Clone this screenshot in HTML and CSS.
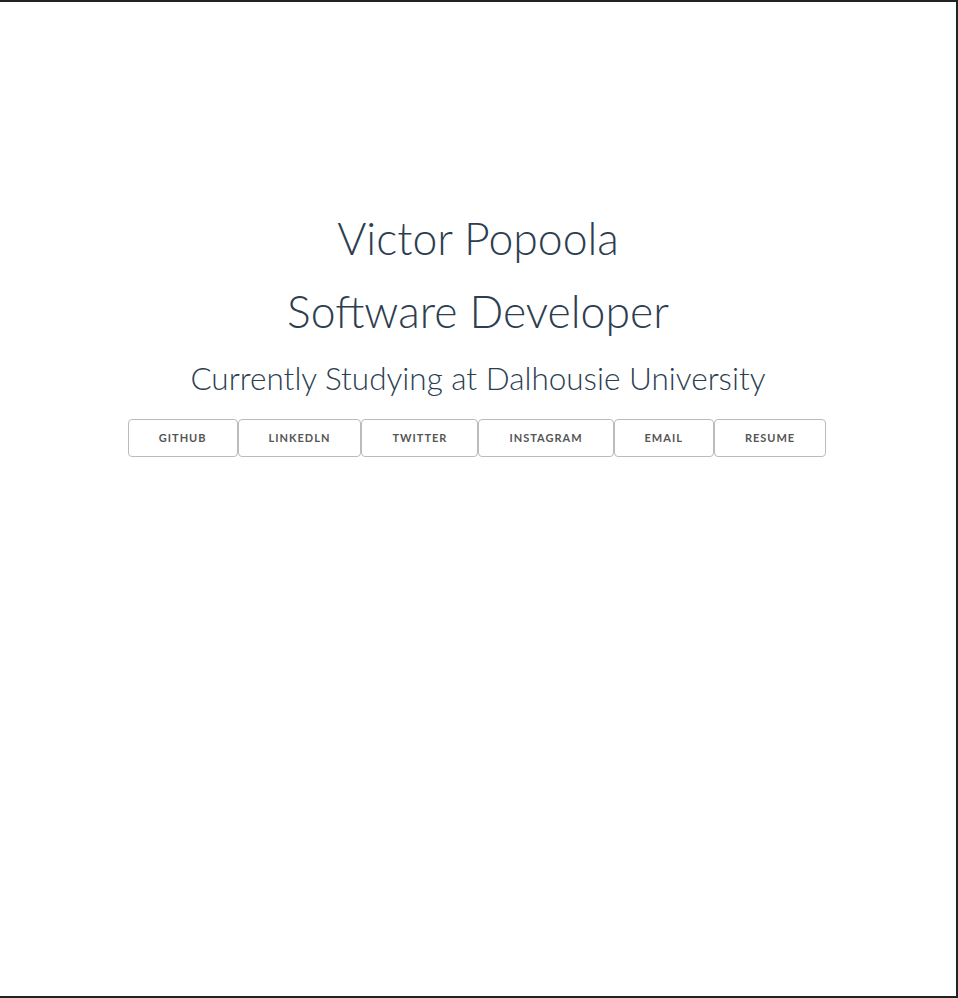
FILE: index.html
```html
<!DOCTYPE html>
<html lang="en">
<head>
<meta charset="utf-8">
<title>Victor Popoola</title>
<link rel="stylesheet" href="styles.css">
</head>
<body>
<main class="frame">
  <section class="hero">
    <h2 class="title">Victor Popoola</h2>
    <h2 class="title">Software Developer</h2>
    <h3 class="subtitle">Currently Studying at Dalhousie University</h3>
    <nav class="links">
      <a class="button" href="#">Github</a>
      <a class="button" href="#">LinkedLn</a>
      <a class="button" href="#">Twitter</a>
      <a class="button" href="#">Instagram</a>
      <a class="button" href="#">Email</a>
      <a class="button" href="#">Resume</a>
    </nav>
  </section>
</main>
</body>
</html>
```
FILE: styles.css
```css
html, body {
  margin: 0;
  padding: 0;
  height: 100%;
}
body {
  font-family: "Lato", "Open Sans", sans-serif;
  color: #2c3e50;
  background: #fff;
}
.frame {
  box-sizing: border-box;
  height: 998px;
  border-top: 2px solid #222;
  border-right: 2px solid #222;
  border-bottom: 2px solid #222;
  background: #fff;
}
.hero {
  padding-top: 210px;
  text-align: center;
}
.title {
  margin: 0 0 20px;
  font-size: 44.5px;
  font-weight: 300;
  line-height: 52.5px;
}
.subtitle {
  margin: 0 0 20px;
  font-size: 31.5px;
  font-weight: 300;
  line-height: 42px;
}
.links {
  display: flex;
  justify-content: center;
  padding-right: 2px;
}
.button {
  display: inline-block;
  box-sizing: border-box;
  height: 38px;
  line-height: 36px;
  padding: 0 30px;
  border: 1px solid #bbb;
  border-radius: 4px;
  color: #555;
  font-size: 11px;
  font-weight: 700;
  letter-spacing: 1px;
  text-transform: uppercase;
  text-decoration: none;
  white-space: nowrap;
}
```
